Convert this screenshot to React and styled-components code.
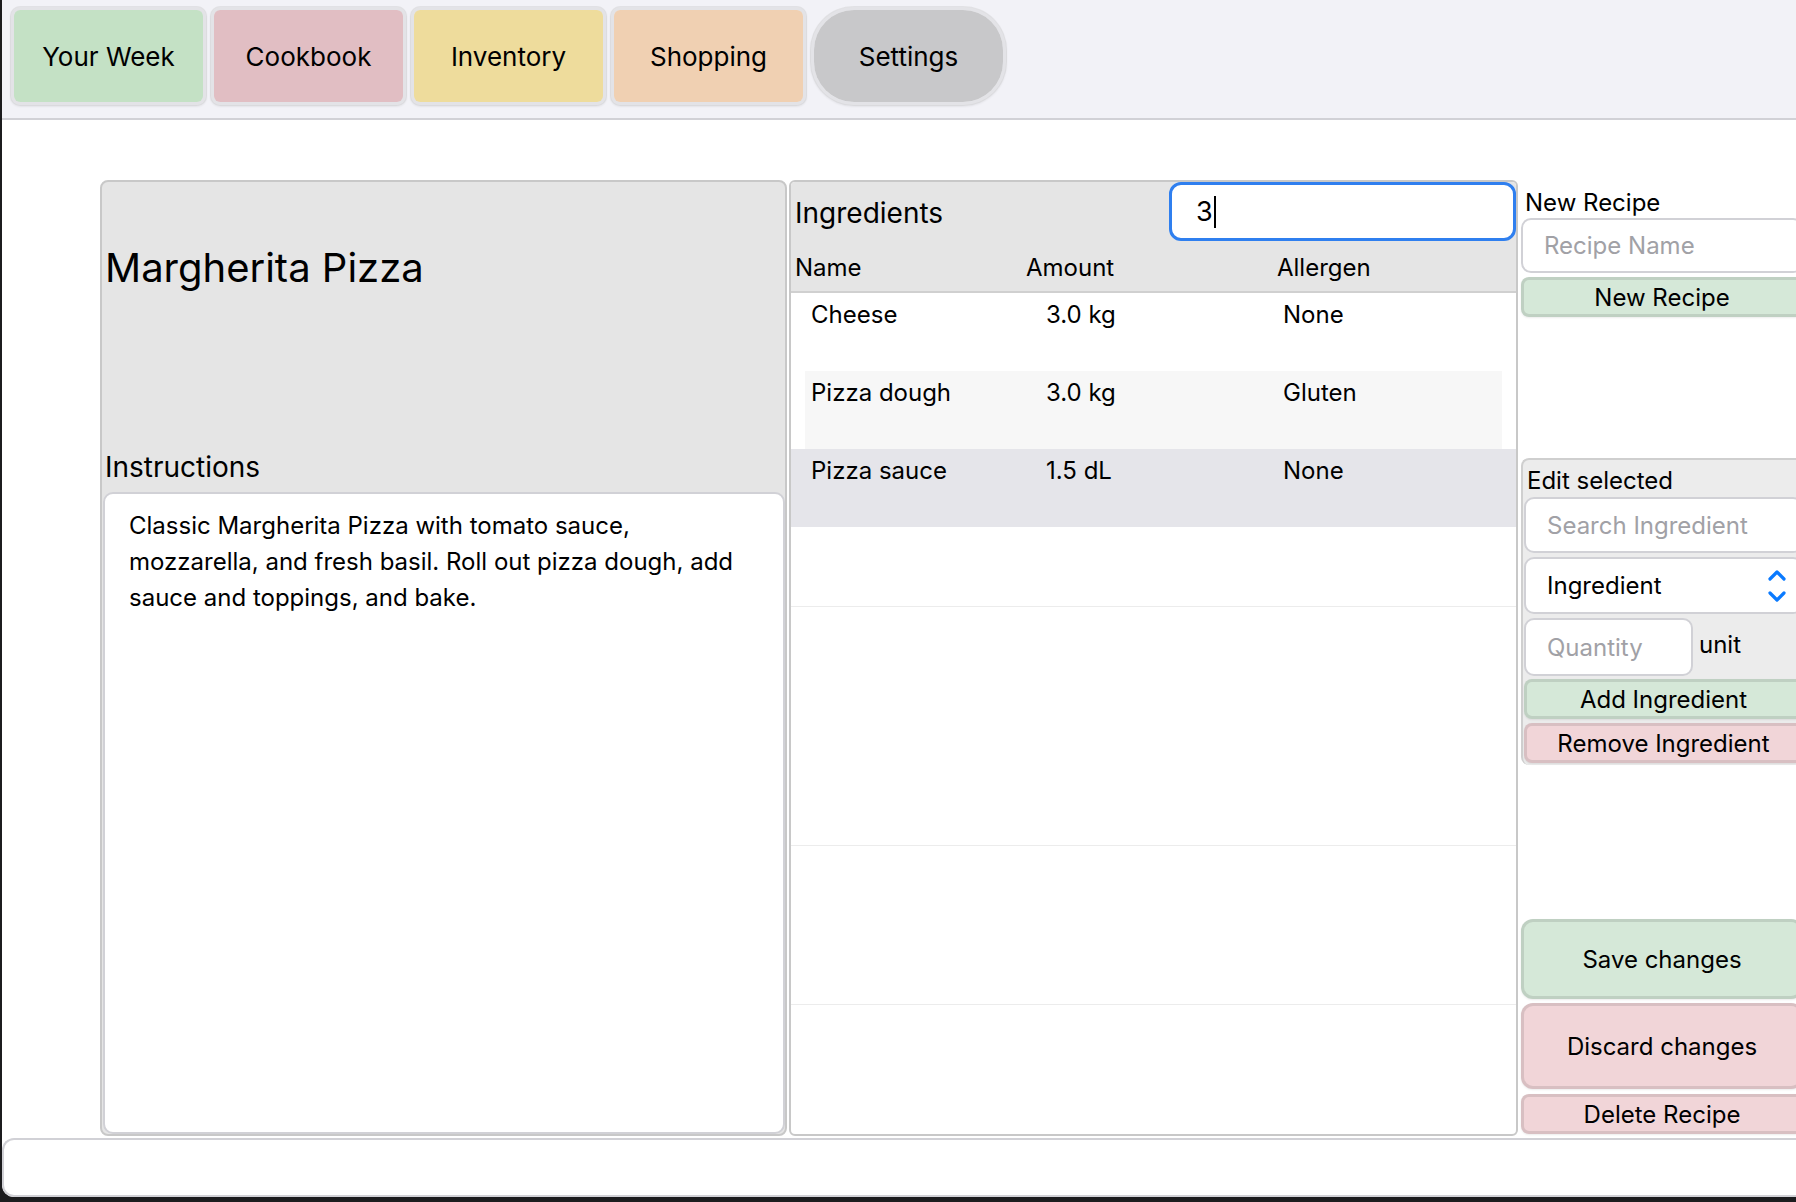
import styled, { createGlobalStyle } from "styled-components";

const GlobalStyle = createGlobalStyle`
  html, body {
    margin: 0;
    padding: 0;
    background: #1c1c1e;
    overflow: hidden;
  }
  * {
    box-sizing: border-box;
  }
`;

const Window = styled.div`
  margin-left: 2px;
  width: 1794px;
  height: 1197px;
  background: #ffffff;
  display: flex;
  flex-direction: column;
  overflow: hidden;
  border-bottom-left-radius: 12px;
  font-family: Inter, "Noto Sans", sans-serif;
  color: #000;
`;

const TabBar = styled.nav`
  height: 120px;
  flex-shrink: 0;
  background: #f2f2f7;
  border-bottom: 2px solid #d1d1d6;
  display: flex;
  gap: 3px;
  padding: 6px 0 0 8px;
`;

const Tab = styled.button`
  width: 197px;
  height: 100px;
  border: 4px solid rgba(200, 200, 200, 0.35);
  border-radius: ${(p) => (p.$pill ? "44px" : "10px")};
  background: ${(p) => p.$bg};
  background-clip: padding-box;
  box-shadow: 0 1px 2px rgba(0, 0, 0, 0.06);
  font-family: inherit;
  font-size: 26px;
  color: #000;
  cursor: pointer;
`;

const Main = styled.main`
  flex: 1;
  display: flex;
  gap: 2px;
  padding: 60px 0 0 98px;
  min-height: 0;
`;

const RecipePanel = styled.section`
  width: 687px;
  flex-shrink: 0;
  background: #e5e5e5;
  border: 2px solid #c8c8c8;
  border-radius: 8px;
  display: flex;
  flex-direction: column;
`;

const RecipeTitle = styled.h1`
  margin: 0;
  padding: 62px 0 0 3px;
  font-size: 40px;
  font-weight: 400;
  line-height: 48px;
`;

const Spacer = styled.div`
  flex: 1;
`;

const SectionLabel = styled.h2`
  margin: 0 0 8px;
  padding-left: 3px;
  font-size: 28px;
  font-weight: 400;
  line-height: 34px;
`;

const InstructionsBox = styled.div`
  height: 642px;
  margin: 0 0 0 1px;
  width: 682px;
  background: #fff;
  border: 2px solid #d1d1d6;
  border-radius: 10px;
  padding: 14px 24px;
  font-size: 24px;
  line-height: 36px;
`;

const IngredientsPanel = styled.section`
  width: 729px;
  flex-shrink: 0;
  background: #fff;
  border: 2px solid #c8c8c8;
  border-radius: 6px;
  display: flex;
  flex-direction: column;
  overflow: hidden;
`;

const TableHead = styled.div`
  background: #e5e5e5;
  border-bottom: 2px solid #d0d0d0;
`;

const HeadTop = styled.div`
  display: flex;
  align-items: center;
  justify-content: space-between;
  height: 61px;
  padding-left: 4px;
`;

const PanelTitle = styled.span`
  font-size: 28px;
  line-height: 34px;
`;

const SearchField = styled.div`
  width: 347px;
  height: 59px;
  align-self: flex-start;
  background: #fff;
  border: 3px solid #2f7fef;
  border-radius: 12px;
  display: flex;
  align-items: center;
  padding-left: 24px;
  font-size: 27px;
`;

const Caret = styled.span`
  display: inline-block;
  width: 2px;
  height: 32px;
  background: #000;
  margin-left: 1px;
`;

const ColumnRow = styled.div`
  display: grid;
  grid-template-columns: 231px 251px 1fr;
  height: 48px;
  align-items: center;
  padding-left: 4px;
  font-size: 24px;
`;

const Row = styled.div`
  display: grid;
  grid-template-columns: 235px 237px 1fr;
  height: 78px;
  padding-top: 7px;
  font-size: 24px;
  line-height: 30px;
  margin: 0 ${(p) => (p.$striped ? "14px" : "0")};
  padding-left: ${(p) => (p.$striped ? "6px" : "20px")};
  background: ${(p) => (p.$selected ? "#e5e5ea" : p.$striped ? "#f7f7f7" : "#fff")};
`;

const Filler = styled.div`
  height: ${(p) => p.$h}px;
  border-bottom: 1px solid #ececec;
`;

const SideColumn = styled.aside`
  width: 282px;
  flex-shrink: 0;
  margin-left: 1px;
  display: flex;
  flex-direction: column;
`;

const SideLabel = styled.div`
  height: 38px;
  padding: 9px 0 0 4px;
  font-size: 24px;
  line-height: 28px;
  overflow: hidden;
`;

const TextField = styled.div`
  height: ${(p) => p.$h || 55}px;
  width: ${(p) => (p.$w ? `${p.$w}px` : "100%")};
  flex-shrink: 0;
  background: #fff;
  border: 2px solid #d1d1d6;
  border-radius: 10px;
  display: flex;
  align-items: center;
  justify-content: space-between;
  padding: 0 14px 0 21px;
  font-size: 24px;
  color: ${(p) => (p.$placeholder ? "#a1a1a6" : "#000")};
`;

const ActionButton = styled.button`
  width: 100%;
  height: ${(p) => p.$h}px;
  flex-shrink: 0;
  margin-top: ${(p) => p.$mt || 4}px;
  background: ${(p) => (p.$tone === "green" ? "#d5e8d8" : "#f1d5d8")};
  border: 3px solid rgba(0, 0, 0, 0.1);
  border-radius: ${(p) => (p.$big ? "12px" : "8px")};
  box-shadow: 0 1px 2px rgba(0, 0, 0, 0.08);
  font-family: inherit;
  font-size: 24px;
  color: #000;
  padding: 0;
  cursor: pointer;
`;

const EditPanel = styled.div`
  margin-top: 141px;
  background: #ececec;
  border: 2px solid #cfcfcf;
  border-right: none;
  border-bottom: none;
  border-radius: 8px 0 0 8px;
  padding: 0 0 2px 1px;
  display: flex;
  flex-direction: column;
`;

const EditLabel = styled.div`
  height: 37px;
  padding: 6px 0 0 3px;
  font-size: 24px;
  line-height: 30px;
`;

const FieldStack = styled.div`
  display: flex;
  flex-direction: column;
  gap: 4px;
`;

const QuantityRow = styled.div`
  display: flex;
  align-items: center;
  gap: 6px;
  font-size: 24px;
`;

const UnitLabel = styled.span`
  padding-bottom: 6px;
`;

const BottomActions = styled.div`
  margin-top: auto;
  display: flex;
  flex-direction: column;
  padding-bottom: 2px;
`;

const BottomBar = styled.footer`
  height: 59px;
  flex-shrink: 0;
  margin-top: 2px;
  background: #fff;
  border: 2px solid #d1d1d6;
  border-right: none;
  border-radius: 12px 0 0 12px;
`;

function Chevrons() {
  return (
    <svg width="20" height="36" viewBox="0 0 20 36" fill="none">
      <path d="M3 11 L10 4 L17 11" stroke="#0a7aff" strokeWidth="3.2" strokeLinecap="round" strokeLinejoin="round" />
      <path d="M3 25 L10 32 L17 25" stroke="#0a7aff" strokeWidth="3.2" strokeLinecap="round" strokeLinejoin="round" />
    </svg>
  );
}

const tabs = [
  { label: "Your Week", bg: "#c4e1c5" },
  { label: "Cookbook", bg: "#e1bec3" },
  { label: "Inventory", bg: "#eedc9c" },
  { label: "Shopping", bg: "#f0d0b2" },
  { label: "Settings", bg: "#c8c8ca", pill: true },
];

const ingredients = [
  { name: "Cheese", amount: "3.0 kg", allergen: "None" },
  { name: "Pizza dough", amount: "3.0 kg", allergen: "Gluten", striped: true },
  { name: "Pizza sauce", amount: "1.5 dL", allergen: "None", selected: true },
];

export default function App() {
  return (
    <>
      <GlobalStyle />
      <Window>
        <TabBar>
          {tabs.map((t) => (
            <Tab key={t.label} $bg={t.bg} $pill={t.pill}>
              {t.label}
            </Tab>
          ))}
        </TabBar>

        <Main>
          <RecipePanel>
            <RecipeTitle>Margherita Pizza</RecipeTitle>
            <Spacer />
            <SectionLabel>Instructions</SectionLabel>
            <InstructionsBox>
              Classic Margherita Pizza with tomato sauce,
              <br />
              mozzarella, and fresh basil. Roll out pizza dough, add
              <br />
              sauce and toppings, and bake.
            </InstructionsBox>
          </RecipePanel>

          <IngredientsPanel>
            <TableHead>
              <HeadTop>
                <PanelTitle>Ingredients</PanelTitle>
                <SearchField>
                  3<Caret />
                </SearchField>
              </HeadTop>
              <ColumnRow>
                <span>Name</span>
                <span>Amount</span>
                <span>Allergen</span>
              </ColumnRow>
            </TableHead>
            {ingredients.map((i) => (
              <Row key={i.name} $striped={i.striped} $selected={i.selected}>
                <span>{i.name}</span>
                <span>{i.amount}</span>
                <span>{i.allergen}</span>
              </Row>
            ))}
            <Filler $h={80} />
            <Filler $h={239} />
            <Filler $h={159} />
          </IngredientsPanel>

          <SideColumn>
            <SideLabel>New Recipe</SideLabel>
            <TextField $placeholder>Recipe Name</TextField>
            <ActionButton $tone="green" $h={40}>
              New Recipe
            </ActionButton>

            <EditPanel>
              <EditLabel>Edit selected</EditLabel>
              <FieldStack>
                <TextField $placeholder $h={56}>
                  Search Ingredient
                </TextField>
                <TextField $h={57}>
                  Ingredient
                  <Chevrons />
                </TextField>
                <QuantityRow>
                  <TextField $placeholder $h={58} $w={169}>
                    Quantity
                  </TextField>
                  <UnitLabel>unit</UnitLabel>
                </QuantityRow>
              </FieldStack>
              <ActionButton $tone="green" $h={40} $mt={3}>
                Add Ingredient
              </ActionButton>
              <ActionButton $tone="pink" $h={40}>
                Remove Ingredient
              </ActionButton>
            </EditPanel>

            <BottomActions>
              <ActionButton $tone="green" $h={80} $big>
                Save changes
              </ActionButton>
              <ActionButton $tone="pink" $h={86} $big>
                Discard changes
              </ActionButton>
              <ActionButton $tone="pink" $h={40} $mt={5}>
                Delete Recipe
              </ActionButton>
            </BottomActions>
          </SideColumn>
        </Main>

        <BottomBar />
      </Window>
    </>
  );
}
